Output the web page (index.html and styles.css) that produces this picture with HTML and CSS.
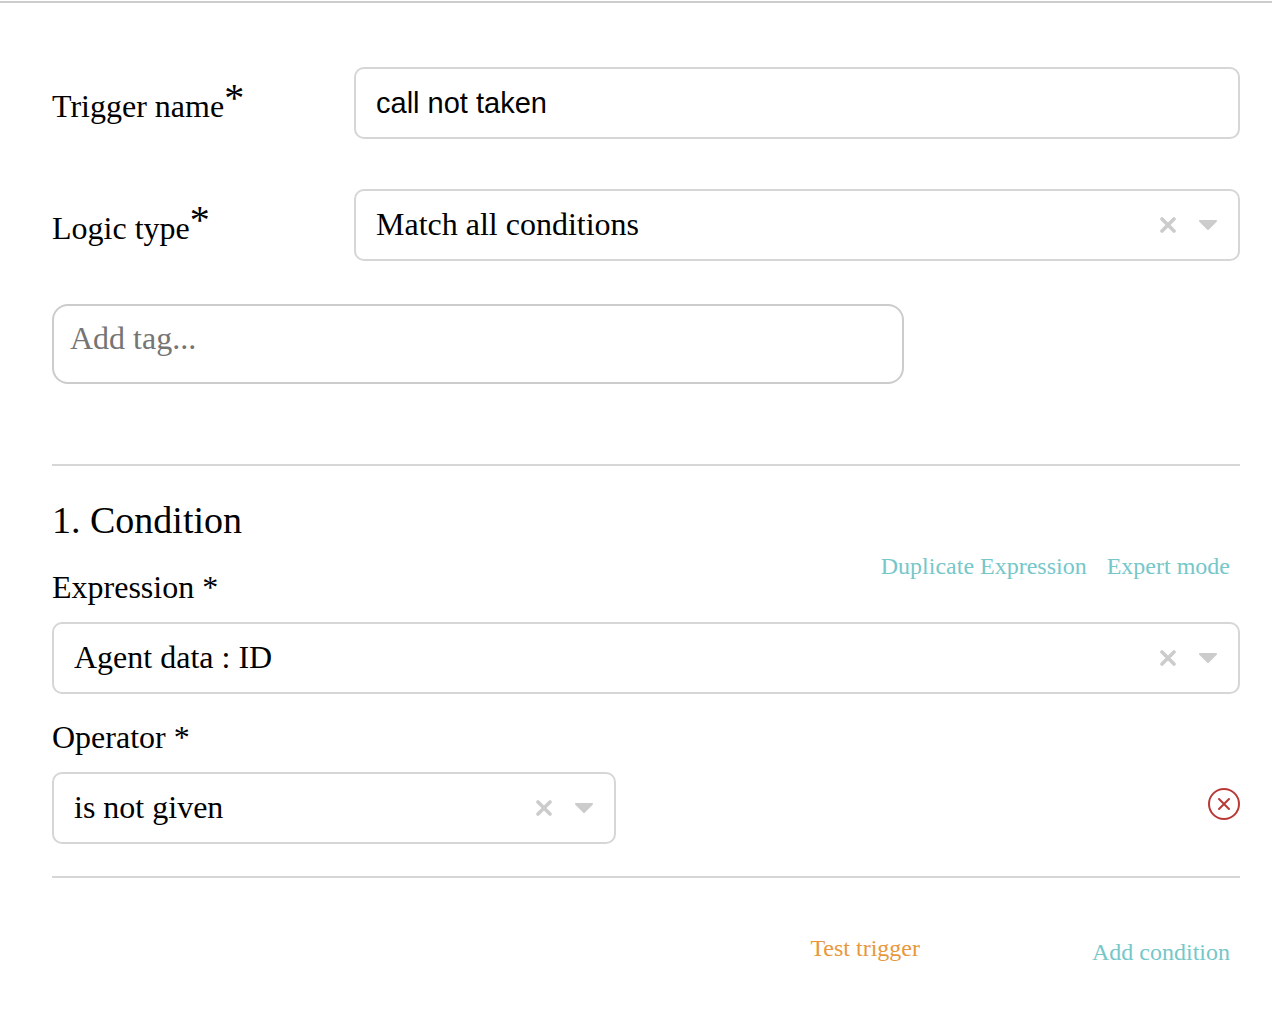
FILE: index.html
```
<!DOCTYPE html>
<html lang="en">
<head>
    <meta charset="UTF-8">
    <meta name="viewport" content="width=device-width, initial-scale=1.0">
    <link rel="stylesheet" href="styles.css">
    <title>Edit trigger</title>
</head>
<body>
    <form class="trigger-form">
        <div class="form-row">
            <label class="row-label" for="triggerName">Trigger name<span class="required">*</span></label>
            <input class="field text-field" type="text" id="triggerName" value="call not taken">
        </div>
        <div class="form-row">
            <label class="row-label" for="logicType">Logic type<span class="required">*</span></label>
            <div class="select-box">
                <select class="field" id="logicType">
                    <option selected>Match all conditions</option>
                    <option>Match any condition</option>
                </select>
                <button class="clear-button" type="button" aria-label="Clear logic type">
                    <svg viewBox="0 0 16 16" width="16" height="16"><path d="M2 2L14 14M14 2L2 14"/></svg>
                </button>
                <svg class="arrow" viewBox="0 0 18 10" width="18" height="10"><path d="M1 1H17L9 9Z"/></svg>
            </div>
        </div>
        <input class="tag-field" type="text" placeholder="Add tag..." aria-label="Add tag">

        <section class="condition">
            <h2>1. Condition</h2>
            <div class="expression-header">
                <label for="expression">Expression *</label>
                <div class="expression-actions">
                    <button class="link-button" type="button">Duplicate Expression</button>
                    <button class="link-button" type="button">Expert mode</button>
                </div>
            </div>
            <div class="select-box">
                <select class="field" id="expression">
                    <option>Agent data : ID</option>
                </select>
                <button class="clear-button" type="button" aria-label="Clear expression">
                    <svg viewBox="0 0 16 16" width="16" height="16"><path d="M2 2L14 14M14 2L2 14"/></svg>
                </button>
                <svg class="arrow" viewBox="0 0 18 10" width="18" height="10"><path d="M1 1H17L9 9Z"/></svg>
            </div>
            <label class="operator-label" for="operator">Operator *</label>
            <div class="operator-row">
                <div class="select-box operator-select">
                    <select class="field" id="operator">
                        <option>is not given</option>
                    </select>
                    <button class="clear-button" type="button" aria-label="Clear operator">
                        <svg viewBox="0 0 16 16" width="16" height="16"><path d="M2 2L14 14M14 2L2 14"/></svg>
                    </button>
                    <svg class="arrow" viewBox="0 0 18 10" width="18" height="10"><path d="M1 1H17L9 9Z"/></svg>
                </div>
                <button class="remove-button" type="button" aria-label="Remove condition">
                    <svg viewBox="0 0 32 32" width="32" height="32"><circle cx="16" cy="16" r="15"/><path d="M11 11L21 21M21 11L11 21"/></svg>
                </button>
            </div>
        </section>

        <div class="form-footer">
            <button class="link-button test-button" type="button">Test trigger</button>
            <button class="link-button add-button" type="button">Add condition</button>
        </div>
    </form>
</body>
</html>
```
FILE: styles.css
```
* {
    box-sizing: border-box;
}

body {
    margin: 0;
    padding-top: 1px;
    background-color: #fff;
    color: #000;
    font-family: "Liberation Serif", "Times New Roman", serif;
    font-size: 32px;
    line-height: 36px;
}

button {
    padding: 0;
    border: none;
    background: none;
    font-family: inherit;
    cursor: pointer;
}

button svg {
    display: block;
}

.trigger-form {
    padding: 64px 32px 48px 52px;
    border-top: 2px solid #ccc;
}

.form-row {
    display: grid;
    grid-template-columns: 302px 1fr;
    align-items: center;
    margin-bottom: 50px;
}

.row-label {
    padding-top: 6px;
}

.required {
    font-size: 40px;
    line-height: 0;
    vertical-align: 6px;
}

.field {
    display: block;
    width: 100%;
    height: 72px;
    padding: 0 20px 2px;
    border: 2px solid #d6d6d6;
    border-radius: 10px;
    background-color: #fff;
    color: #000;
    font-family: inherit;
    font-size: 32px;
    appearance: none;
}

.text-field {
    padding: 0 20px;
    font-family: "Liberation Sans", Arial, sans-serif;
    font-size: 29px;
}

.select-box {
    position: relative;
}

.clear-button {
    position: absolute;
    top: 28px;
    right: 64px;
}

.clear-button path {
    fill: none;
    stroke: #ccc;
    stroke-width: 3.6;
    stroke-linecap: round;
}

.arrow {
    position: absolute;
    top: 31px;
    right: 23px;
    pointer-events: none;
}

.arrow path {
    fill: #ccc;
    stroke: #ccc;
    stroke-width: 2;
    stroke-linejoin: round;
}

.tag-field {
    display: block;
    width: 71.7%;
    height: 80px;
    margin-top: -7px;
    padding: 0 16px 12px;
    border: 2px solid #ccc;
    border-radius: 16px;
    font-family: inherit;
    font-size: 32px;
}

.tag-field::placeholder {
    color: #757575;
}

.condition {
    margin-top: 80px;
    padding: 32px 0;
    border-top: 2px solid #d6d6d6;
    border-bottom: 2px solid #d6d6d6;
}

.condition h2 {
    margin: 0;
    font-size: 38px;
    font-weight: normal;
    line-height: 44px;
}

.expression-header {
    display: flex;
    justify-content: space-between;
    align-items: flex-start;
    padding: 10px 10px 17px 0;
}

.expression-header label {
    padding-top: 17px;
}

.expression-actions {
    display: flex;
    gap: 20px;
}

.link-button {
    color: #76c7c9;
    font-size: 24px;
    line-height: 28px;
}

.operator-label {
    display: block;
    padding: 25px 0 17px;
}

.operator-row {
    display: flex;
    justify-content: space-between;
    align-items: flex-start;
}

.operator-select {
    flex-basis: 564px;
}

.remove-button {
    margin-top: 16px;
}

.remove-button svg {
    fill: none;
    stroke: #b93a38;
    stroke-width: 2;
    stroke-linecap: round;
}

.form-footer {
    display: flex;
    justify-content: flex-end;
    align-items: flex-start;
    gap: 172px;
    padding: 56px 10px 0 0;
}

.test-button {
    color: #e8983a;
}

.add-button {
    margin-top: 4px;
}
```
